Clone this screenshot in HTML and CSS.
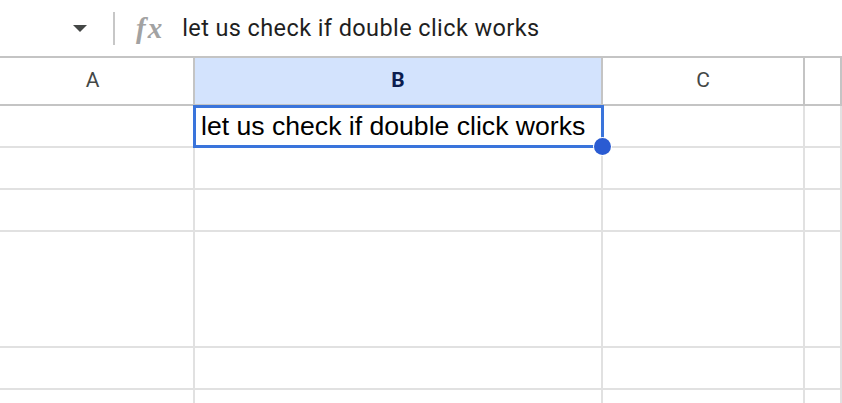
FILE: index.html
```html
<!DOCTYPE html>
<html>
<head>
<meta charset="utf-8">
<link rel="stylesheet" href="styles.css">
</head>
<body>
<div class="formula-bar">
  <div class="name-box">
    <svg class="caret" width="14" height="7" viewBox="0 0 14 7"><path d="M0 0 L14 0 L7 7 Z" fill="#444746"/></svg>
  </div>
  <div class="sep"></div>
  <div class="fx">fx</div>
  <div class="formula-text">let us check if double click works</div>
</div>
<div class="sheet">
  <div class="row header">
    <div class="cell colA hcell hcellA">A</div>
    <div class="cell colB hcell selected">B</div>
    <div class="cell colC hcell">C</div>
    <div class="cell colD hcell"></div>
  </div>
  <div class="row">
    <div class="cell colA"></div>
    <div class="cell colB active">
      <span class="cell-text">let us check if double click works</span>
      <div class="sel-box"></div>
      <div class="sel-handle"></div>
    </div>
    <div class="cell colC"></div>
    <div class="cell colD"></div>
  </div>
  <div class="row">
    <div class="cell colA"></div><div class="cell colB"></div><div class="cell colC"></div><div class="cell colD"></div>
  </div>
  <div class="row">
    <div class="cell colA"></div><div class="cell colB"></div><div class="cell colC"></div><div class="cell colD"></div>
  </div>
  <div class="row tall">
    <div class="cell colA"></div><div class="cell colB"></div><div class="cell colC"></div><div class="cell colD"></div>
  </div>
  <div class="row">
    <div class="cell colA"></div><div class="cell colB"></div><div class="cell colC"></div><div class="cell colD"></div>
  </div>
  <div class="row">
    <div class="cell colA"></div><div class="cell colB"></div><div class="cell colC"></div><div class="cell colD"></div>
  </div>
</div>
</body>
</html>
```
FILE: styles.css
```css
html, body {
  margin: 0;
  padding: 0;
  background: #ffffff;
  overflow: hidden;
}
body {
  font-family: "Liberation Sans", Arial, sans-serif;
  width: 842px;
  height: 403px;
}
.formula-bar {
  height: 56px;
  display: flex;
  align-items: center;
}
.name-box {
  width: 87px;
  display: flex;
  justify-content: flex-end;
}
.caret {
  display: block;
}
.sep {
  width: 2px;
  height: 33px;
  background: #c7c7c7;
  margin-left: 26px;
}
.fx {
  font-family: "Liberation Serif", "Times New Roman", serif;
  font-style: italic;
  font-weight: 700;
  font-size: 29px;
  color: #a2a2a2;
  margin-left: 21px;
  letter-spacing: 2px;
  line-height: 1;
}
.formula-text {
  font-family: Roboto, "Liberation Sans", sans-serif;
  font-size: 23.5px;
  letter-spacing: 0.4px;
  color: #1f1f1f;
  margin-left: 18px;
}
.sheet {
  display: flex;
  flex-direction: column;
}
.row {
  display: flex;
  height: 42px;
}
.row.tall {
  height: 116px;
}
.row.header {
  height: 50px;
  border-top: 2px solid #c4c4c4;
  box-sizing: border-box;
}
.cell {
  box-sizing: border-box;
  border-right: 2px solid #e1e1e1;
  border-bottom: 2px solid #e1e1e1;
  position: relative;
}
.colA { width: 195px; }
.colB { width: 408px; }
.colC { width: 202px; }
.colD { flex: 1; }
.hcell {
  border-right-color: #c4c4c4;
  border-bottom-color: #c4c4c4;
  display: flex;
  align-items: center;
  justify-content: center;
  font-family: Roboto, "Liberation Sans", sans-serif;
  font-size: 21px;
  color: #444746;
  padding-bottom: 2px;
}
.hcellA {
  padding-right: 8px;
}
.hcell.selected {
  background: #d3e3fd;
  color: #0b1d4f;
  font-weight: 700;
}
.cell.active {
  display: flex;
  align-items: center;
}
.cell-text {
  font-family: "Liberation Sans", Arial, sans-serif;
  font-size: 26.6px;
  color: #000000;
  margin-left: 6px;
  white-space: nowrap;
}
.sel-box {
  position: absolute;
  left: -2px;
  top: -1px;
  width: 411px;
  height: 43px;
  box-sizing: border-box;
  border: 3px solid #3a74db;
}
.sel-handle {
  position: absolute;
  left: 399px;
  top: 32px;
  width: 17px;
  height: 17px;
  border-radius: 50%;
  background: #2a5bd2;
  box-shadow: 0 0 0 1px #ffffff;
  z-index: 2;
}
```
